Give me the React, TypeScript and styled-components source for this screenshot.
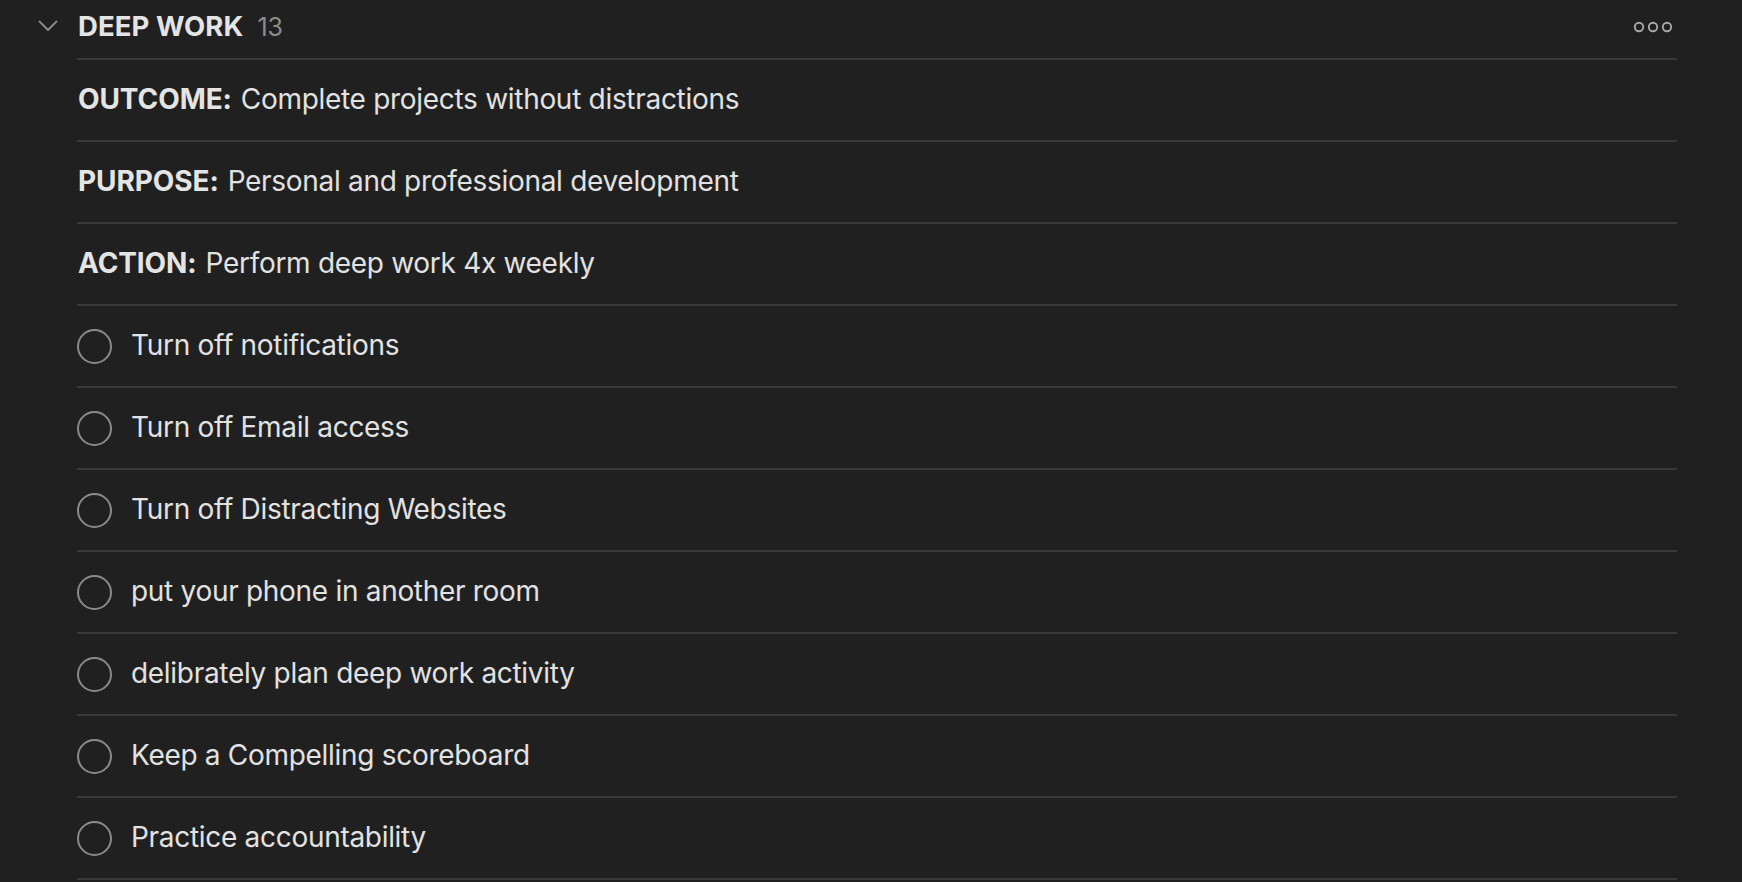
import { ReactElement } from "react";
import styled, { createGlobalStyle } from "styled-components";

interface IRule {
  label: string;
  text: string;
}

const rules: Array<IRule> = [
  { label: "OUTCOME:", text: "Complete projects without distractions" },
  { label: "PURPOSE:", text: "Personal and professional development" },
  { label: "ACTION:", text: "Perform deep work 4x weekly" },
];

const tasks: Array<string> = [
  "Turn off notifications",
  "Turn off Email access",
  "Turn off Distracting Websites",
  "put your phone in another room",
  "delibrately plan deep work activity",
  "Keep a Compelling scoreboard",
  "Practice accountability",
];

const App = (): ReactElement => {
  return (
    <>
      <GlobalStyle />
      <Page>
        <Section>
          <Header>
            <Chevron>
              <svg width="20" height="12" viewBox="0 0 20 12">
                <path
                  d="M1.5 1.5 L10 10 L18.5 1.5"
                  fill="none"
                  stroke="#8a8a8a"
                  strokeWidth="1.8"
                  strokeLinecap="round"
                  strokeLinejoin="round"
                />
              </svg>
            </Chevron>
            <Title>DEEP WORK</Title>
            <Count>13</Count>
            <MoreButton>
              <svg width="40" height="12" viewBox="0 0 40 12">
                <circle cx="6" cy="6" r="4.2" fill="none" stroke="#a8a8a8" strokeWidth="1.9" />
                <circle cx="20" cy="6" r="4.2" fill="none" stroke="#a8a8a8" strokeWidth="1.9" />
                <circle cx="34" cy="6" r="4.2" fill="none" stroke="#a8a8a8" strokeWidth="1.9" />
              </svg>
            </MoreButton>
          </Header>
          {rules.map((r) => (
            <Row key={r.label}>
              <Label>{r.label}</Label>
              <RowText>{r.text}</RowText>
            </Row>
          ))}
          {tasks.map((t) => (
            <Row key={t}>
              <Check />
              <RowText>{t}</RowText>
            </Row>
          ))}
        </Section>
      </Page>
    </>
  );
};

export default App;

const GlobalStyle = createGlobalStyle`
  html, body {
    margin: 0;
    padding: 0;
    background-color: #202020;
    overflow: hidden;
  }
  body {
    font-family: Inter, "Noto Sans", "Liberation Sans", sans-serif;
    color: #e2e2e2;
    -webkit-font-smoothing: antialiased;
  }
`;

const Page = styled.div`
  min-height: 100vh;
  background-color: #202020;
  padding-left: 77px;
`;

const Section = styled.div`
  width: 1600px;
`;

const Header = styled.div`
  position: relative;
  display: flex;
  align-items: center;
  height: 60px;
  padding-bottom: 7px;
  border-bottom: 2px solid #393939;
  box-sizing: border-box;
`;

const Chevron = styled.div`
  position: absolute;
  left: -39px;
  top: 20px;
  display: flex;
`;

const Title = styled.div`
  font-size: 27.5px;
  font-weight: 700;
  letter-spacing: 0.1px;
  color: #e4e4e4;
  margin-left: 1px;
`;

const Count = styled.div`
  font-size: 25px;
  color: #8c8c8c;
  margin-left: 14px;
  margin-top: 2px;
`;

const MoreButton = styled.div`
  margin-left: auto;
  margin-right: 4px;
  display: flex;
  margin-top: 2px;
`;

const Row = styled.div`
  display: flex;
  align-items: center;
  height: 82px;
  padding-bottom: 3px;
  border-bottom: 2px solid #393939;
  box-sizing: border-box;
  font-size: 28px;
  letter-spacing: -0.3px;
`;

const Label = styled.span`
  font-weight: 700;
  color: #e4e4e4;
  margin-right: 9px;
  margin-left: 1px;
  letter-spacing: -0.1px;
`;

const RowText = styled.span`
  color: #e2e2e2;
`;

const Check = styled.div`
  width: 31px;
  height: 31px;
  margin-top: 3px;
  border: 2px solid #8a8a8a;
  border-radius: 50%;
  margin-right: 19px;
  flex-shrink: 0;
`;
